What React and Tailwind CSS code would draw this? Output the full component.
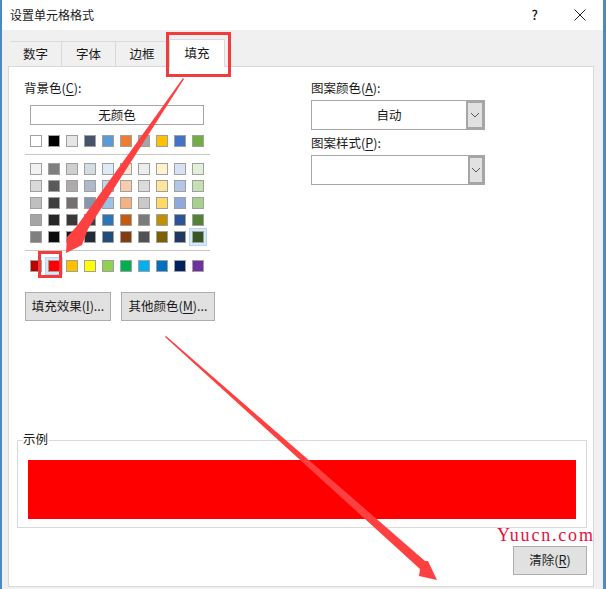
import React from "react";

const themeRow = ["#ffffff", "#000000", "#e7e6e6", "#44546a", "#5b9bd5", "#ed7d31", "#a5a5a5", "#ffc000", "#4472c4", "#70ad47"];
const shades = [
  ["#f2f2f2", "#7f7f7f", "#d0cece", "#d6dce4", "#deeaf6", "#fbe5d5", "#ededed", "#fff2cc", "#d9e2f3", "#e2efd9"],
  ["#d8d8d8", "#595959", "#aeaaaa", "#adb9ca", "#bdd7ee", "#f7cbac", "#dbdbdb", "#fee599", "#b4c6e7", "#c5e0b3"],
  ["#bfbfbf", "#3f3f3f", "#757070", "#8496b0", "#9cc3e5", "#f4b183", "#c9c9c9", "#ffd965", "#8eaadb", "#a8d08d"],
  ["#a5a5a5", "#262626", "#3a3838", "#323f4f", "#2e75b5", "#c55a11", "#7b7b7b", "#bf9000", "#2f5496", "#538135"],
  ["#7f7f7f", "#0c0c0c", "#171616", "#222a35", "#1e4e79", "#833c0b", "#525252", "#7f6000", "#1f3864", "#375623"],
];
const standard = ["#c00000", "#ff0000", "#ffc000", "#ffff00", "#92d050", "#00b050", "#00b0f0", "#0070c0", "#002060", "#7030a0"];

const Swatch = ({ color, selected }) => (
  <div className="relative w-[12px] h-[12px]">
    {selected && <div className="absolute -inset-[3px] border border-[#b5d8f5] bg-[#d5e8f8]" />}
    <div className="absolute inset-0 border border-[#a0a0a0]" style={{ backgroundColor: color }} />
  </div>
);

const SwatchRow = ({ colors, selected }) => (
  <div className="flex gap-[6px]">
    {colors.map((c, i) => (
      <Swatch key={i} color={c} selected={i === selected} />
    ))}
  </div>
);

const Tab = ({ label, width }) => (
  <div
    className="h-[25px] flex items-center justify-center bg-[#f0f0f0] border-t border-r border-[#d9d9d9]"
    style={{ width }}
  >
    {label}
  </div>
);

const Hotkey = ({ children }) => <span className="underline underline-offset-2">{children}</span>;

const Button = ({ width, children }) => (
  <div
    className="h-[29px] flex items-center justify-center bg-[#e1e1e1] border border-[#adadad] text-[12.5px]"
    style={{ width }}
  >
    {children}
  </div>
);

const Select = ({ value, arrowWidth }) => (
  <div className="flex w-[174px] h-[30px] bg-white border border-[#a6a6a6]">
    <div className="flex-1 flex items-center justify-center">{value}</div>
    <div
      className="flex items-center justify-center bg-[#e1e1e1] border-2 border-[#a6a6a6]"
      style={{ width: arrowWidth }}
    >
      <svg width="10" height="6" viewBox="0 0 10 6" fill="none" stroke="#555" strokeWidth="1">
        <path d="M1 1l4 4 4-4" />
      </svg>
    </div>
  </div>
);

export default function App() {
  return (
    <div
      className="relative w-[606px] h-[589px] overflow-hidden bg-[#f0f0f0] text-[12.5px] text-[#1a1a1a] border-l-2 border-r-[3px] border-[#4a8bc2]"
      style={{ fontFamily: '"Noto Sans CJK SC", sans-serif' }}
    >
      {/* title bar */}
      <div className="h-[30px] bg-white flex items-center justify-between pl-[8px] pr-[17px] pb-[1px]">
        <span className="text-[12px]">设置单元格格式</span>
        <div className="flex items-center gap-[36px]">
          <span className="text-[13px] font-medium">?</span>
          <svg width="12" height="12" viewBox="0 0 12 12" fill="none" stroke="#222" strokeWidth="1">
            <path d="M.5.5l11 11M11.5.5l-11 11" />
          </svg>
        </div>
      </div>

      {/* tabs */}
      <div className="flex items-end h-[36px] pl-[8px]">
        <Tab label="数字" width={52} />
        <Tab label="字体" width={54} />
        <Tab label="边框" width={53} />
        <div className="w-[56px] h-[28px] -mb-px z-10 flex items-center justify-center bg-white border-t border-x border-[#d9d9d9]">
          填充
        </div>
      </div>

      {/* panel */}
      <div className="ml-[6px] w-[586px] h-[521px] bg-white border border-[#d9d9d9] flex flex-col">
        <div className="flex h-[373px]">
          <div className="w-[302px] pl-[16px] pt-[12px]">
            <div className="h-[18px] leading-[18px] -ml-[1px]">
              背景色(<Hotkey>C</Hotkey>):
            </div>
            <div className="mt-[8px] ml-[5px] w-[174px] h-[20px] border border-[#a6a6a6] flex items-center justify-center">
              无颜色
            </div>
            <div className="mt-[10px] ml-[5px]">
              <SwatchRow colors={themeRow} />
            </div>
            <div className="mt-[7px] w-[185px] h-[1px] bg-[#c8c8c8]" />
            <div className="mt-[8px] ml-[5px] flex flex-col gap-[5px]">
              {shades.map((row, i) => (
                <SwatchRow key={i} colors={row} selected={i === 4 ? 9 : undefined} />
              ))}
            </div>
            <div className="mt-[7px] w-[185px] h-[1px] bg-[#c8c8c8]" />
            <div className="mt-[9px] ml-[5px]">
              <SwatchRow colors={standard} selected={1} />
            </div>
            <div className="mt-[20px] flex gap-[10px]">
              <Button width={86}>
                填充效果(<Hotkey>I</Hotkey>)...
              </Button>
              <Button width={94}>
                其他颜色(<Hotkey>M</Hotkey>)...
              </Button>
            </div>
          </div>
          <div className="pt-[12px]">
            <div className="h-[21px] leading-[18px]">
              图案颜色(<Hotkey>A</Hotkey>):
            </div>
            <Select value="自动" arrowWidth={18} />
            <div className="mt-[3px] h-[22px] leading-[20px]">
              图案样式(<Hotkey>P</Hotkey>):
            </div>
            <Select arrowWidth={16} />
          </div>
        </div>

        {/* sample */}
        <div className="relative ml-[8px] w-[570px] h-[88px] border border-[#d9d9d9] pt-[19px] pl-[10px]">
          <span className="absolute -top-[11px] left-[5px] bg-white pr-[1px] text-[12.5px]">示例</span>
          <div className="w-[548px] h-[59px] bg-[#ff0000]" />
        </div>
        <div className="mt-[18px] ml-[504px] flex">
          <Button width={74}>
            清除(<Hotkey>R</Hotkey>)
          </Button>
        </div>
      </div>

      {/* markup drawn over the screenshot */}
      <div className="absolute left-[164px] top-[32px] w-[65px] h-[45px] border-[3px] border-[#f23c3c]" />
      <div className="absolute left-[36px] top-[251px] w-[24px] h-[27px] border-[3px] border-[#f23c3c]" />
      <svg className="absolute left-[-2px] top-0" width="606" height="589" viewBox="0 0 606 589">
        <polygon points="183,78 184,79 88,229 82,245 66,253 67,237 77,226" fill="#ff4040" />
        <polygon points="165,337 166,336 425,561 428,561 437,580 419,576 420,569" fill="#ff4040" />
      </svg>
      <span
        className="absolute left-[495px] top-[525px] text-[18px] leading-[20px] tracking-[1.8px] text-[#e8103c]"
        style={{ fontFamily: '"Liberation Serif", serif' }}
      >
        Yuucn.com
      </span>
    </div>
  );
}
